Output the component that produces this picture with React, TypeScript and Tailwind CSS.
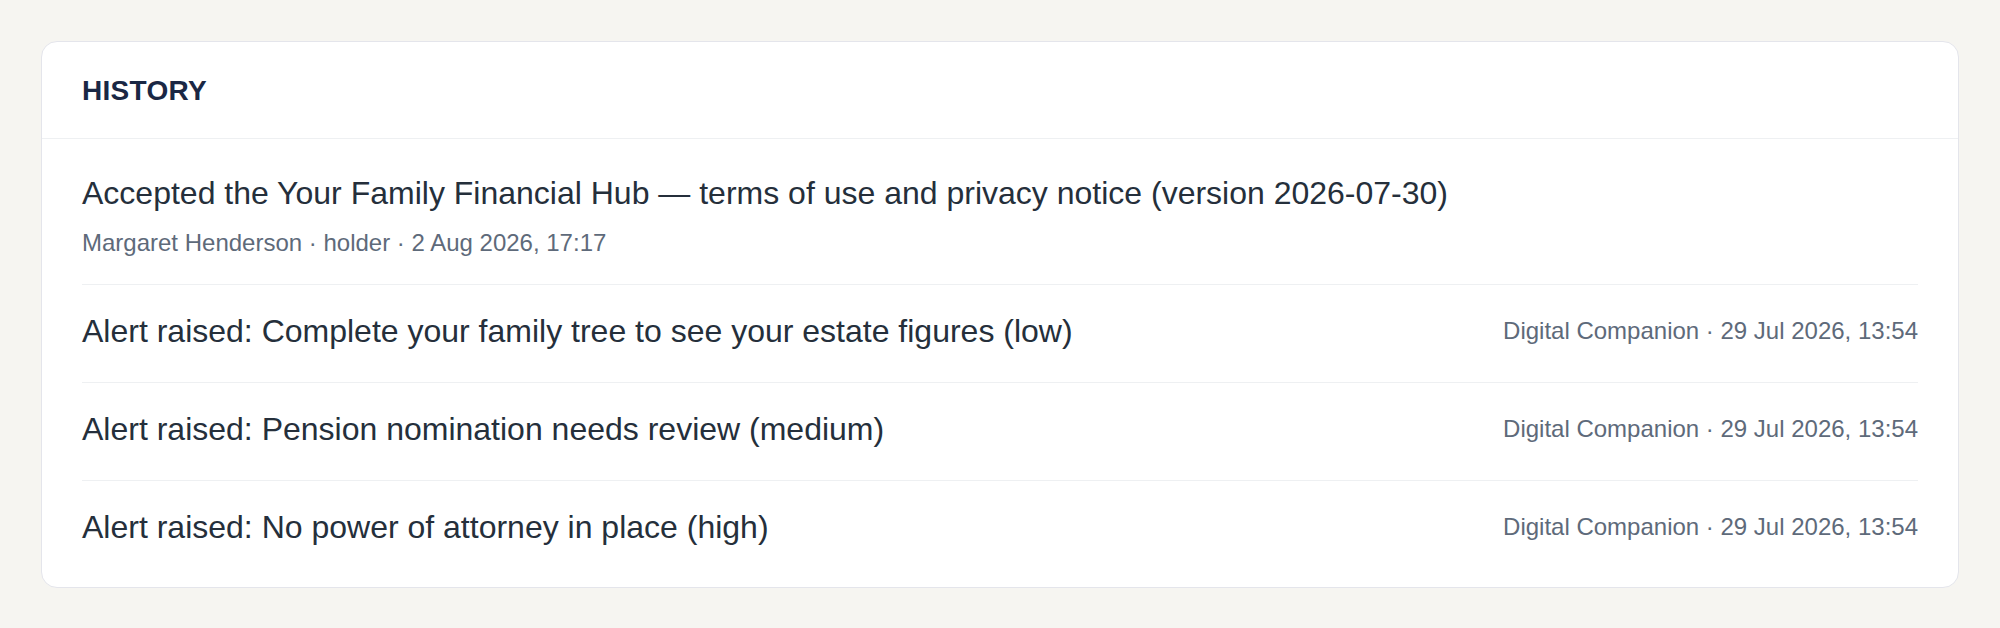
const entries = [
  {
    id: 1,
    title:
      "Accepted the Your Family Financial Hub \u2014 terms of use and privacy notice (version 2026-07-30)",
    meta: "Margaret Henderson \u00b7 holder \u00b7 2 Aug 2026, 17:17",
    stacked: true,
  },
  {
    id: 2,
    title: "Alert raised: Complete your family tree to see your estate figures (low)",
    meta: "Digital Companion \u00b7 29 Jul 2026, 13:54",
    stacked: false,
  },
  {
    id: 3,
    title: "Alert raised: Pension nomination needs review (medium)",
    meta: "Digital Companion \u00b7 29 Jul 2026, 13:54",
    stacked: false,
  },
  {
    id: 4,
    title: "Alert raised: No power of attorney in place (high)",
    meta: "Digital Companion \u00b7 29 Jul 2026, 13:54",
    stacked: false,
  },
];

export default function App() {
  return (
    <div className="min-h-screen bg-[#f6f5f1] p-[41px] font-['Liberation_Sans',Arial,sans-serif]">
      <div className="rounded-2xl border border-[#e4e5eb] bg-white">
        {/* Header */}
        <div className="border-b border-[#eef0f2] px-10 pt-[33px] pb-[31px]">
          <h2 className="text-[28px] leading-[32px] font-bold tracking-[0.3px] text-[#1a2744]">
            HISTORY
          </h2>
        </div>

        {/* Rows */}
        <ul className="px-10 pt-2 pb-[9px]">
          {entries.map((entry, i) => (
            <li
              key={entry.id}
              className={`pt-[22px] pb-[27px] ${
                i < entries.length - 1 ? "border-b border-[#eef0f2]" : ""
              }`}
            >
              {entry.stacked ? (
                <div>
                  <p className="text-[32px] leading-[48px] text-[#252f3b]">{entry.title}</p>
                  <p className="mt-3 text-[24px] leading-[28px] text-[#5e6a7a]">{entry.meta}</p>
                </div>
              ) : (
                <div className="flex items-center justify-between gap-8">
                  <p className="text-[32px] leading-[48px] text-[#252f3b]">{entry.title}</p>
                  <p className="shrink-0 text-[24px] leading-[28px] text-[#5e6a7a]">{entry.meta}</p>
                </div>
              )}
            </li>
          ))}
        </ul>
      </div>
    </div>
  );
}
